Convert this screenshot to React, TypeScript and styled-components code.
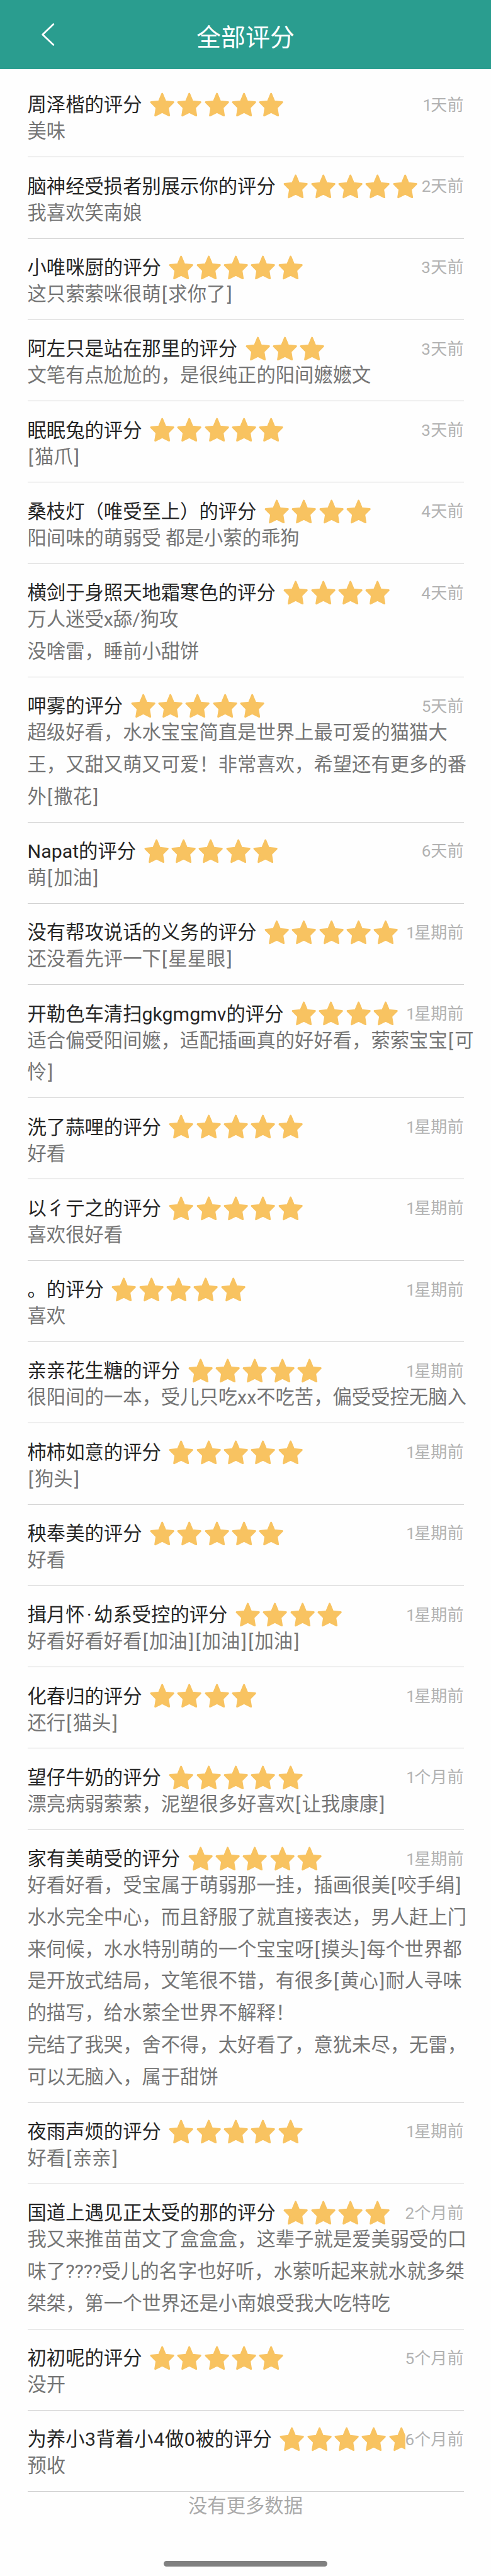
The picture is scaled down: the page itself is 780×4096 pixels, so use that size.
import React from 'react';
import styled, { createGlobalStyle } from 'styled-components';

const GlobalStyle = createGlobalStyle`
  * { box-sizing: border-box; }
  body {
    margin: 0;
    background: #fefefe;
    font-family: Roboto, "Noto Sans CJK SC", sans-serif;
  }
`;

const Page = styled.div`
  display: flex;
  flex-direction: column;
  width: 780px;
  height: 4096px;
  overflow: hidden;
`;

const Header = styled.header`
  display: grid;
  grid-template-columns: 150px 1fr 150px;
  align-items: center;
  flex: none;
  height: 110px;
  padding-top: 10px;
  background: #2a9d8f;
`;

const BackButton = styled.button`
  display: flex;
  width: 22px;
  height: 36px;
  margin: -10px 0 0 65px;
  padding: 0;
  border: 0;
  background: none;
`;

const Title = styled.h1`
  margin: 0;
  color: #fff;
  font-size: 39px;
  font-weight: 400;
  line-height: 56px;
  text-align: center;
  white-space: nowrap;
`;

const List = styled.main`
  flex: none;
  padding: 11px 43.5px 0;
`;

const Item = styled.article`
  padding: 29.1px 0 14.1px;
  border-bottom: 1px solid #d0d0d0;
`;

const ItemHead = styled.div`
  display: flex;
  align-items: center;
  height: 33.65px;
`;

const Rating = styled.div`
  display: flex;
  flex: 1;
  align-items: center;
  min-width: 0;
  overflow-x: clip;
`;

const Name = styled.span`
  flex: none;
  margin-right: 10.6px;
  color: #262626;
  font-size: 30.34px;
  line-height: 33px;
  white-space: pre;
`;

const Stars = styled.span`
  display: flex;
  flex: none;
`;

const Time = styled.time`
  flex: none;
  color: #b2b2b2;
  font-size: 26.1px;
  line-height: 34px;
  white-space: nowrap;
`;

const Comment = styled.p`
  margin: 0;
  padding-top: 0.7px;
  color: #757575;
  font-size: 30.34px;
  line-height: 50.77px;
  white-space: pre;
`;

const Glyph = styled.span<{ $before: number; $after: number }>`
  margin-left: ${(p) => p.$before}em;
  margin-right: ${(p) => p.$after}em;
`;

const Footer = styled.footer`
  display: flex;
  flex: 1;
  flex-direction: column;
  align-items: center;
  justify-content: space-between;
  padding: 1px 0 15px;
  color: #aaa;
  font-size: 30.34px;
  line-height: 44px;
`;

const HomeBar = styled.div`
  width: 260px;
  height: 9px;
  border-radius: 4.5px;
  background: #808080;
`;

const Star = () => (
  <svg width="43.33" height="43.33" viewBox="0 0 60 60">
    <path
      d="M30 5.5 L37 22.5 L54.5 24.3 L42.5 36.5 L45.3 53.5 L30 46 L14.7 53.5 L17.5 36.5 L5.5 24.3 L23 22.5 Z"
      fill="#f8c361"
      stroke="#f8c361"
      strokeWidth="4"
      strokeLinejoin="round"
    />
  </svg>
);

interface Review {
  user: string;
  stars: number;
  time: string;
  text: string;
}

const reviews: Review[] = [
  { user: '周泽楷', stars: 5, time: '1天前', text: '美味' },
  { user: '脑神经受损者别展示你', stars: 5, time: '2天前', text: '我喜欢笑南娘' },
  { user: '小唯咪厨', stars: 5, time: '3天前', text: '这只萦萦咪很萌[求你了]' },
  { user: '阿左只是站在那里', stars: 3, time: '3天前', text: '文笔有点尬尬的，是很纯正的阳间嬷嬷文' },
  { user: '眠眠兔', stars: 5, time: '3天前', text: '[猫爪]' },
  { user: '桑枝灯（唯受至上）', stars: 4, time: '4天前', text: '阳间味的萌弱受 都是小萦的乖狗' },
  { user: '横剑于身照天地霜寒色', stars: 4, time: '4天前', text: '万人迷受x舔/狗攻\n没啥雷，睡前小甜饼' },
  {
    user: '呷雾',
    stars: 5,
    time: '5天前',
    text: '超级好看，水水宝宝简直是世界上最可爱的猫猫大\n王，又甜又萌又可爱！非常喜欢，希望还有更多的番\n外[撒花]',
  },
  { user: 'Napat', stars: 5, time: '6天前', text: '萌[加油]' },
  { user: '没有帮攻说话的义务', stars: 5, time: '1星期前', text: '还没看先评一下[星星眼]' },
  {
    user: '开勒色车清扫gkgmgmv',
    stars: 4,
    time: '1星期前',
    text: '适合偏受阳间嬷，适配插画真的好好看，萦萦宝宝[可\n怜]',
  },
  { user: '洗了蒜哩', stars: 5, time: '1星期前', text: '好看' },
  { user: '以彳亍之', stars: 5, time: '1星期前', text: '喜欢很好看' },
  { user: '。', stars: 5, time: '1星期前', text: '喜欢' },
  { user: '亲亲花生糖', stars: 5, time: '1星期前', text: '很阳间的一本，受儿只吃xx不吃苦，偏受受控无脑入' },
  { user: '柿柿如意', stars: 5, time: '1星期前', text: '[狗头]' },
  { user: '秧奉美', stars: 5, time: '1星期前', text: '好看' },
  { user: '揖月怀·幼系受控', stars: 4, time: '1星期前', text: '好看好看好看[加油][加油][加油]' },
  { user: '化春归', stars: 4, time: '1星期前', text: '还行[猫头]' },
  { user: '望仔牛奶', stars: 5, time: '1个月前', text: '漂亮病弱萦萦，泥塑很多好喜欢[让我康康]' },
  {
    user: '家有美萌受',
    stars: 5,
    time: '1星期前',
    text: '好看好看，受宝属于萌弱那一挂，插画很美[咬手绢]\n水水完全中心，而且舒服了就直接表达，男人赶上门\n来伺候，水水特别萌的一个宝宝呀[摸头]每个世界都\n是开放式结局，文笔很不错，有很多[黄心]耐人寻味\n的描写，给水萦全世界不解释！\n完结了我哭，舍不得，太好看了，意犹未尽，无雷，\n可以无脑入，属于甜饼',
  },
  { user: '夜雨声烦', stars: 5, time: '1星期前', text: '好看[亲亲]' },
  {
    user: '国道上遇见正太受的那',
    stars: 4,
    time: '2个月前',
    text: '我又来推苗苗文了盒盒盒，这辈子就是爱美弱受的口\n味了????受儿的名字也好听，水萦听起来就水就多桀\n桀桀，第一个世界还是小南娘受我大吃特吃',
  },
  { user: '初初呢', stars: 5, time: '5个月前', text: '没开' },
  { user: '为养小3背着小4做0被', stars: 5, time: '6个月前', text: '预收' },
];

// Extra side space, in em, for the narrow glyphs set among Chinese text.
const spacing: Record<string, [number, number]> = {
  '[': [0.04, 0.076],
  ']': [0.076, 0.04],
  '·': [0.11, 0.11],
  '1': [-0.07, -0.07],
  '0': [0.02, 0.02],
  '3': [0.02, 0.02],
  '4': [0.02, 0.02],
};

const renderText = (text: string) =>
  text.split(/([[\]·0134])/).map((part, i) => {
    const space = spacing[part];
    return space ? (
      <Glyph key={i} $before={space[0]} $after={space[1]}>
        {part}
      </Glyph>
    ) : (
      part
    );
  });

const ReviewItem = ({ user, stars, time, text }: Review) => (
  <Item>
    <ItemHead>
      <Rating>
        <Name>{renderText(user)}的评分</Name>
        <Stars>
          {Array.from({ length: stars }, (_, i) => (
            <Star key={i} />
          ))}
        </Stars>
      </Rating>
      <Time>{renderText(time)}</Time>
    </ItemHead>
    <Comment>{renderText(text)}</Comment>
  </Item>
);

export default function App() {
  return (
    <Page lang="zh-CN">
      <GlobalStyle />
      <Header>
        <BackButton aria-label="返回">
          <svg width="22" height="36" viewBox="0 0 22 36" fill="none">
            <path
              d="M19.8 1.6 L2.7 18 L19.8 34.3"
              stroke="#fff"
              strokeWidth="2.8"
              strokeLinecap="round"
              strokeLinejoin="round"
            />
          </svg>
        </BackButton>
        <Title>全部评分</Title>
      </Header>
      <List>
        {reviews.map((review, i) => (
          <ReviewItem key={i} {...review} />
        ))}
      </List>
      <Footer>
        <span>没有更多数据</span>
        <HomeBar />
      </Footer>
    </Page>
  );
}
